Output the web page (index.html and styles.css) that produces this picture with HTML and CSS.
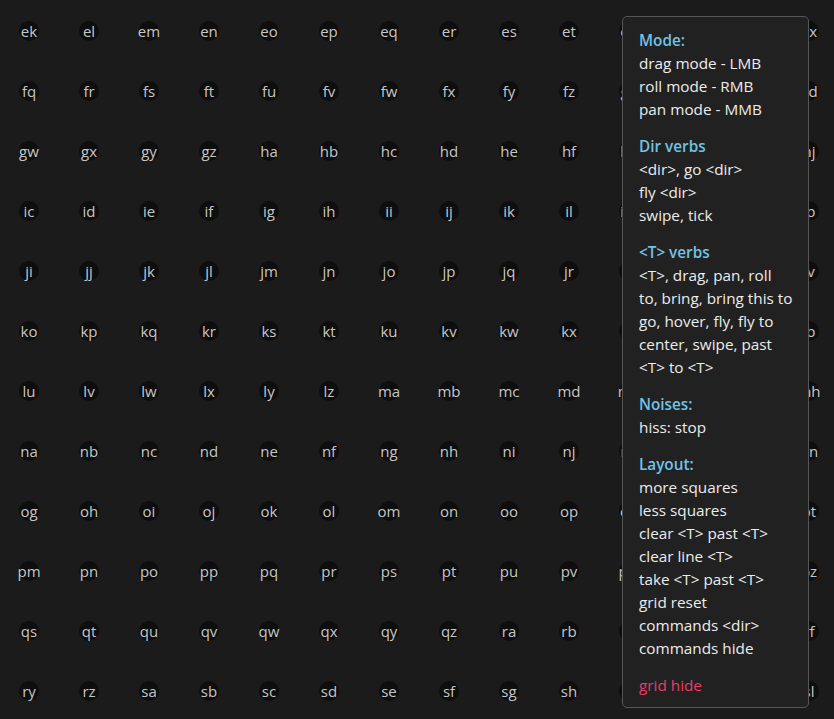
FILE: index.html
```html
<!DOCTYPE html>
<html lang="en">
<head>
<meta charset="utf-8">
<title>Grid</title>
<link rel="stylesheet" href="styles.css">
</head>
<body>
<div class="grid">
<div class="cell"><span class="tag">ek</span></div><div class="cell"><span class="tag">el</span></div><div class="cell"><span class="tag">em</span></div><div class="cell"><span class="tag">en</span></div><div class="cell"><span class="tag">eo</span></div><div class="cell"><span class="tag">ep</span></div><div class="cell"><span class="tag">eq</span></div><div class="cell"><span class="tag">er</span></div><div class="cell"><span class="tag">es</span></div><div class="cell"><span class="tag">et</span></div><div class="cell"><span class="tag">eu</span></div><div class="cell"><span class="tag">ev</span></div><div class="cell"><span class="tag">ew</span></div><div class="cell"><span class="tag">ex</span></div>
<div class="cell"><span class="tag">fq</span></div><div class="cell"><span class="tag">fr</span></div><div class="cell"><span class="tag">fs</span></div><div class="cell"><span class="tag">ft</span></div><div class="cell"><span class="tag">fu</span></div><div class="cell"><span class="tag">fv</span></div><div class="cell"><span class="tag">fw</span></div><div class="cell"><span class="tag">fx</span></div><div class="cell"><span class="tag">fy</span></div><div class="cell"><span class="tag">fz</span></div><div class="cell"><span class="tag">ga</span></div><div class="cell"><span class="tag">gb</span></div><div class="cell"><span class="tag">gc</span></div><div class="cell"><span class="tag">gd</span></div>
<div class="cell"><span class="tag">gw</span></div><div class="cell"><span class="tag">gx</span></div><div class="cell"><span class="tag">gy</span></div><div class="cell"><span class="tag">gz</span></div><div class="cell"><span class="tag">ha</span></div><div class="cell"><span class="tag">hb</span></div><div class="cell"><span class="tag">hc</span></div><div class="cell"><span class="tag">hd</span></div><div class="cell"><span class="tag">he</span></div><div class="cell"><span class="tag">hf</span></div><div class="cell"><span class="tag">hg</span></div><div class="cell"><span class="tag">hh</span></div><div class="cell"><span class="tag">hi</span></div><div class="cell"><span class="tag">hj</span></div>
<div class="cell"><span class="tag">ic</span></div><div class="cell"><span class="tag">id</span></div><div class="cell"><span class="tag">ie</span></div><div class="cell"><span class="tag">if</span></div><div class="cell"><span class="tag">ig</span></div><div class="cell"><span class="tag">ih</span></div><div class="cell"><span class="tag">ii</span></div><div class="cell"><span class="tag">ij</span></div><div class="cell"><span class="tag">ik</span></div><div class="cell"><span class="tag">il</span></div><div class="cell"><span class="tag">im</span></div><div class="cell"><span class="tag">in</span></div><div class="cell"><span class="tag">io</span></div><div class="cell"><span class="tag">ip</span></div>
<div class="cell"><span class="tag">ji</span></div><div class="cell"><span class="tag">jj</span></div><div class="cell"><span class="tag">jk</span></div><div class="cell"><span class="tag">jl</span></div><div class="cell"><span class="tag">jm</span></div><div class="cell"><span class="tag">jn</span></div><div class="cell"><span class="tag">jo</span></div><div class="cell"><span class="tag">jp</span></div><div class="cell"><span class="tag">jq</span></div><div class="cell"><span class="tag">jr</span></div><div class="cell"><span class="tag">js</span></div><div class="cell"><span class="tag">jt</span></div><div class="cell"><span class="tag">ju</span></div><div class="cell"><span class="tag">jv</span></div>
<div class="cell"><span class="tag">ko</span></div><div class="cell"><span class="tag">kp</span></div><div class="cell"><span class="tag">kq</span></div><div class="cell"><span class="tag">kr</span></div><div class="cell"><span class="tag">ks</span></div><div class="cell"><span class="tag">kt</span></div><div class="cell"><span class="tag">ku</span></div><div class="cell"><span class="tag">kv</span></div><div class="cell"><span class="tag">kw</span></div><div class="cell"><span class="tag">kx</span></div><div class="cell"><span class="tag">ky</span></div><div class="cell"><span class="tag">kz</span></div><div class="cell"><span class="tag">la</span></div><div class="cell"><span class="tag">lb</span></div>
<div class="cell"><span class="tag">lu</span></div><div class="cell"><span class="tag">lv</span></div><div class="cell"><span class="tag">lw</span></div><div class="cell"><span class="tag">lx</span></div><div class="cell"><span class="tag">ly</span></div><div class="cell"><span class="tag">lz</span></div><div class="cell"><span class="tag">ma</span></div><div class="cell"><span class="tag">mb</span></div><div class="cell"><span class="tag">mc</span></div><div class="cell"><span class="tag">md</span></div><div class="cell"><span class="tag">me</span></div><div class="cell"><span class="tag">mf</span></div><div class="cell"><span class="tag">mg</span></div><div class="cell"><span class="tag">mh</span></div>
<div class="cell"><span class="tag">na</span></div><div class="cell"><span class="tag">nb</span></div><div class="cell"><span class="tag">nc</span></div><div class="cell"><span class="tag">nd</span></div><div class="cell"><span class="tag">ne</span></div><div class="cell"><span class="tag">nf</span></div><div class="cell"><span class="tag">ng</span></div><div class="cell"><span class="tag">nh</span></div><div class="cell"><span class="tag">ni</span></div><div class="cell"><span class="tag">nj</span></div><div class="cell"><span class="tag">nk</span></div><div class="cell"><span class="tag">nl</span></div><div class="cell"><span class="tag">nm</span></div><div class="cell"><span class="tag">nn</span></div>
<div class="cell"><span class="tag">og</span></div><div class="cell"><span class="tag">oh</span></div><div class="cell"><span class="tag">oi</span></div><div class="cell"><span class="tag">oj</span></div><div class="cell"><span class="tag">ok</span></div><div class="cell"><span class="tag">ol</span></div><div class="cell"><span class="tag">om</span></div><div class="cell"><span class="tag">on</span></div><div class="cell"><span class="tag">oo</span></div><div class="cell"><span class="tag">op</span></div><div class="cell"><span class="tag">oq</span></div><div class="cell"><span class="tag">or</span></div><div class="cell"><span class="tag">os</span></div><div class="cell"><span class="tag">ot</span></div>
<div class="cell"><span class="tag">pm</span></div><div class="cell"><span class="tag">pn</span></div><div class="cell"><span class="tag">po</span></div><div class="cell"><span class="tag">pp</span></div><div class="cell"><span class="tag">pq</span></div><div class="cell"><span class="tag">pr</span></div><div class="cell"><span class="tag">ps</span></div><div class="cell"><span class="tag">pt</span></div><div class="cell"><span class="tag">pu</span></div><div class="cell"><span class="tag">pv</span></div><div class="cell"><span class="tag">pw</span></div><div class="cell"><span class="tag">px</span></div><div class="cell"><span class="tag">py</span></div><div class="cell"><span class="tag">pz</span></div>
<div class="cell"><span class="tag">qs</span></div><div class="cell"><span class="tag">qt</span></div><div class="cell"><span class="tag">qu</span></div><div class="cell"><span class="tag">qv</span></div><div class="cell"><span class="tag">qw</span></div><div class="cell"><span class="tag">qx</span></div><div class="cell"><span class="tag">qy</span></div><div class="cell"><span class="tag">qz</span></div><div class="cell"><span class="tag">ra</span></div><div class="cell"><span class="tag">rb</span></div><div class="cell"><span class="tag">rc</span></div><div class="cell"><span class="tag">rd</span></div><div class="cell"><span class="tag">re</span></div><div class="cell"><span class="tag">rf</span></div>
<div class="cell"><span class="tag">ry</span></div><div class="cell"><span class="tag">rz</span></div><div class="cell"><span class="tag">sa</span></div><div class="cell"><span class="tag">sb</span></div><div class="cell"><span class="tag">sc</span></div><div class="cell"><span class="tag">sd</span></div><div class="cell"><span class="tag">se</span></div><div class="cell"><span class="tag">sf</span></div><div class="cell"><span class="tag">sg</span></div><div class="cell"><span class="tag">sh</span></div><div class="cell"><span class="tag">si</span></div><div class="cell"><span class="tag">sj</span></div><div class="cell"><span class="tag">sk</span></div><div class="cell"><span class="tag">sl</span></div>
</div>

<aside class="help">
  <section class="group">
    <h3 class="title">Mode:</h3>
    <p class="line">drag mode - LMB</p>
    <p class="line">roll mode - RMB</p>
    <p class="line">pan mode - MMB</p>
  </section>
  <section class="group">
    <h3 class="title">Dir verbs</h3>
    <p class="line">&lt;dir&gt;, go &lt;dir&gt;</p>
    <p class="line">fly &lt;dir&gt;</p>
    <p class="line">swipe, tick</p>
  </section>
  <section class="group">
    <h3 class="title">&lt;T&gt; verbs</h3>
    <p class="line">&lt;T&gt;, drag, pan, roll</p>
    <p class="line">to, bring, bring this to</p>
    <p class="line">go, hover, fly, fly to</p>
    <p class="line">center, swipe, past</p>
    <p class="line">&lt;T&gt; to &lt;T&gt;</p>
  </section>
  <section class="group">
    <h3 class="title">Noises:</h3>
    <p class="line">hiss: stop</p>
  </section>
  <section class="group">
    <h3 class="title">Layout:</h3>
    <p class="line">more squares</p>
    <p class="line">less squares</p>
    <p class="line">clear &lt;T&gt; past &lt;T&gt;</p>
    <p class="line">clear line &lt;T&gt;</p>
    <p class="line">take &lt;T&gt; past &lt;T&gt;</p>
    <p class="line">grid reset</p>
    <p class="line">commands &lt;dir&gt;</p>
    <p class="line">commands hide</p>
  </section>
  <section class="group">
    <p class="line danger">grid hide</p>
  </section>
</aside>
</body>
</html>
```

FILE: styles.css
```css
html, body {
  margin: 0;
  padding: 0;
  background: #1b1b1b;
  overflow: hidden;
  height: 100%;
}

body {
  font-family: "Open Sans", "Noto Sans", sans-serif;
  position: relative;
}

.grid {
  display: grid;
  grid-template-columns: repeat(14, 60px);
  grid-auto-rows: 60px;
  margin-left: -1px;
  padding-top: 1px;
}

.cell {
  display: flex;
  align-items: center;
  justify-content: center;
}

.tag {
  width: 20px;
  height: 20px;
  border-radius: 50%;
  background: #0e0e0e;
  display: flex;
  align-items: center;
  justify-content: center;
  color: #c6c6c6;
  font-size: 15px;
  line-height: 20px;
  white-space: nowrap;
}

.help {
  position: absolute;
  top: 16px;
  right: 25px;
  width: 187px;
  box-sizing: border-box;
  padding: 12px 10px 10px 16px;
  background: #212121;
  border: 1px solid #565656;
  border-radius: 5px;
  font-size: 15.3px;
  line-height: 23px;
  color: #ececec;
}

.group {
  margin: 0 0 14px 0;
}

.group:last-child {
  margin-bottom: 0;
}

.title {
  margin: 0;
  font-size: inherit;
  font-weight: 600;
  color: #72c2e6;
}

.line {
  margin: 0;
  white-space: nowrap;
}

.danger {
  color: #ea3c68;
}
```
